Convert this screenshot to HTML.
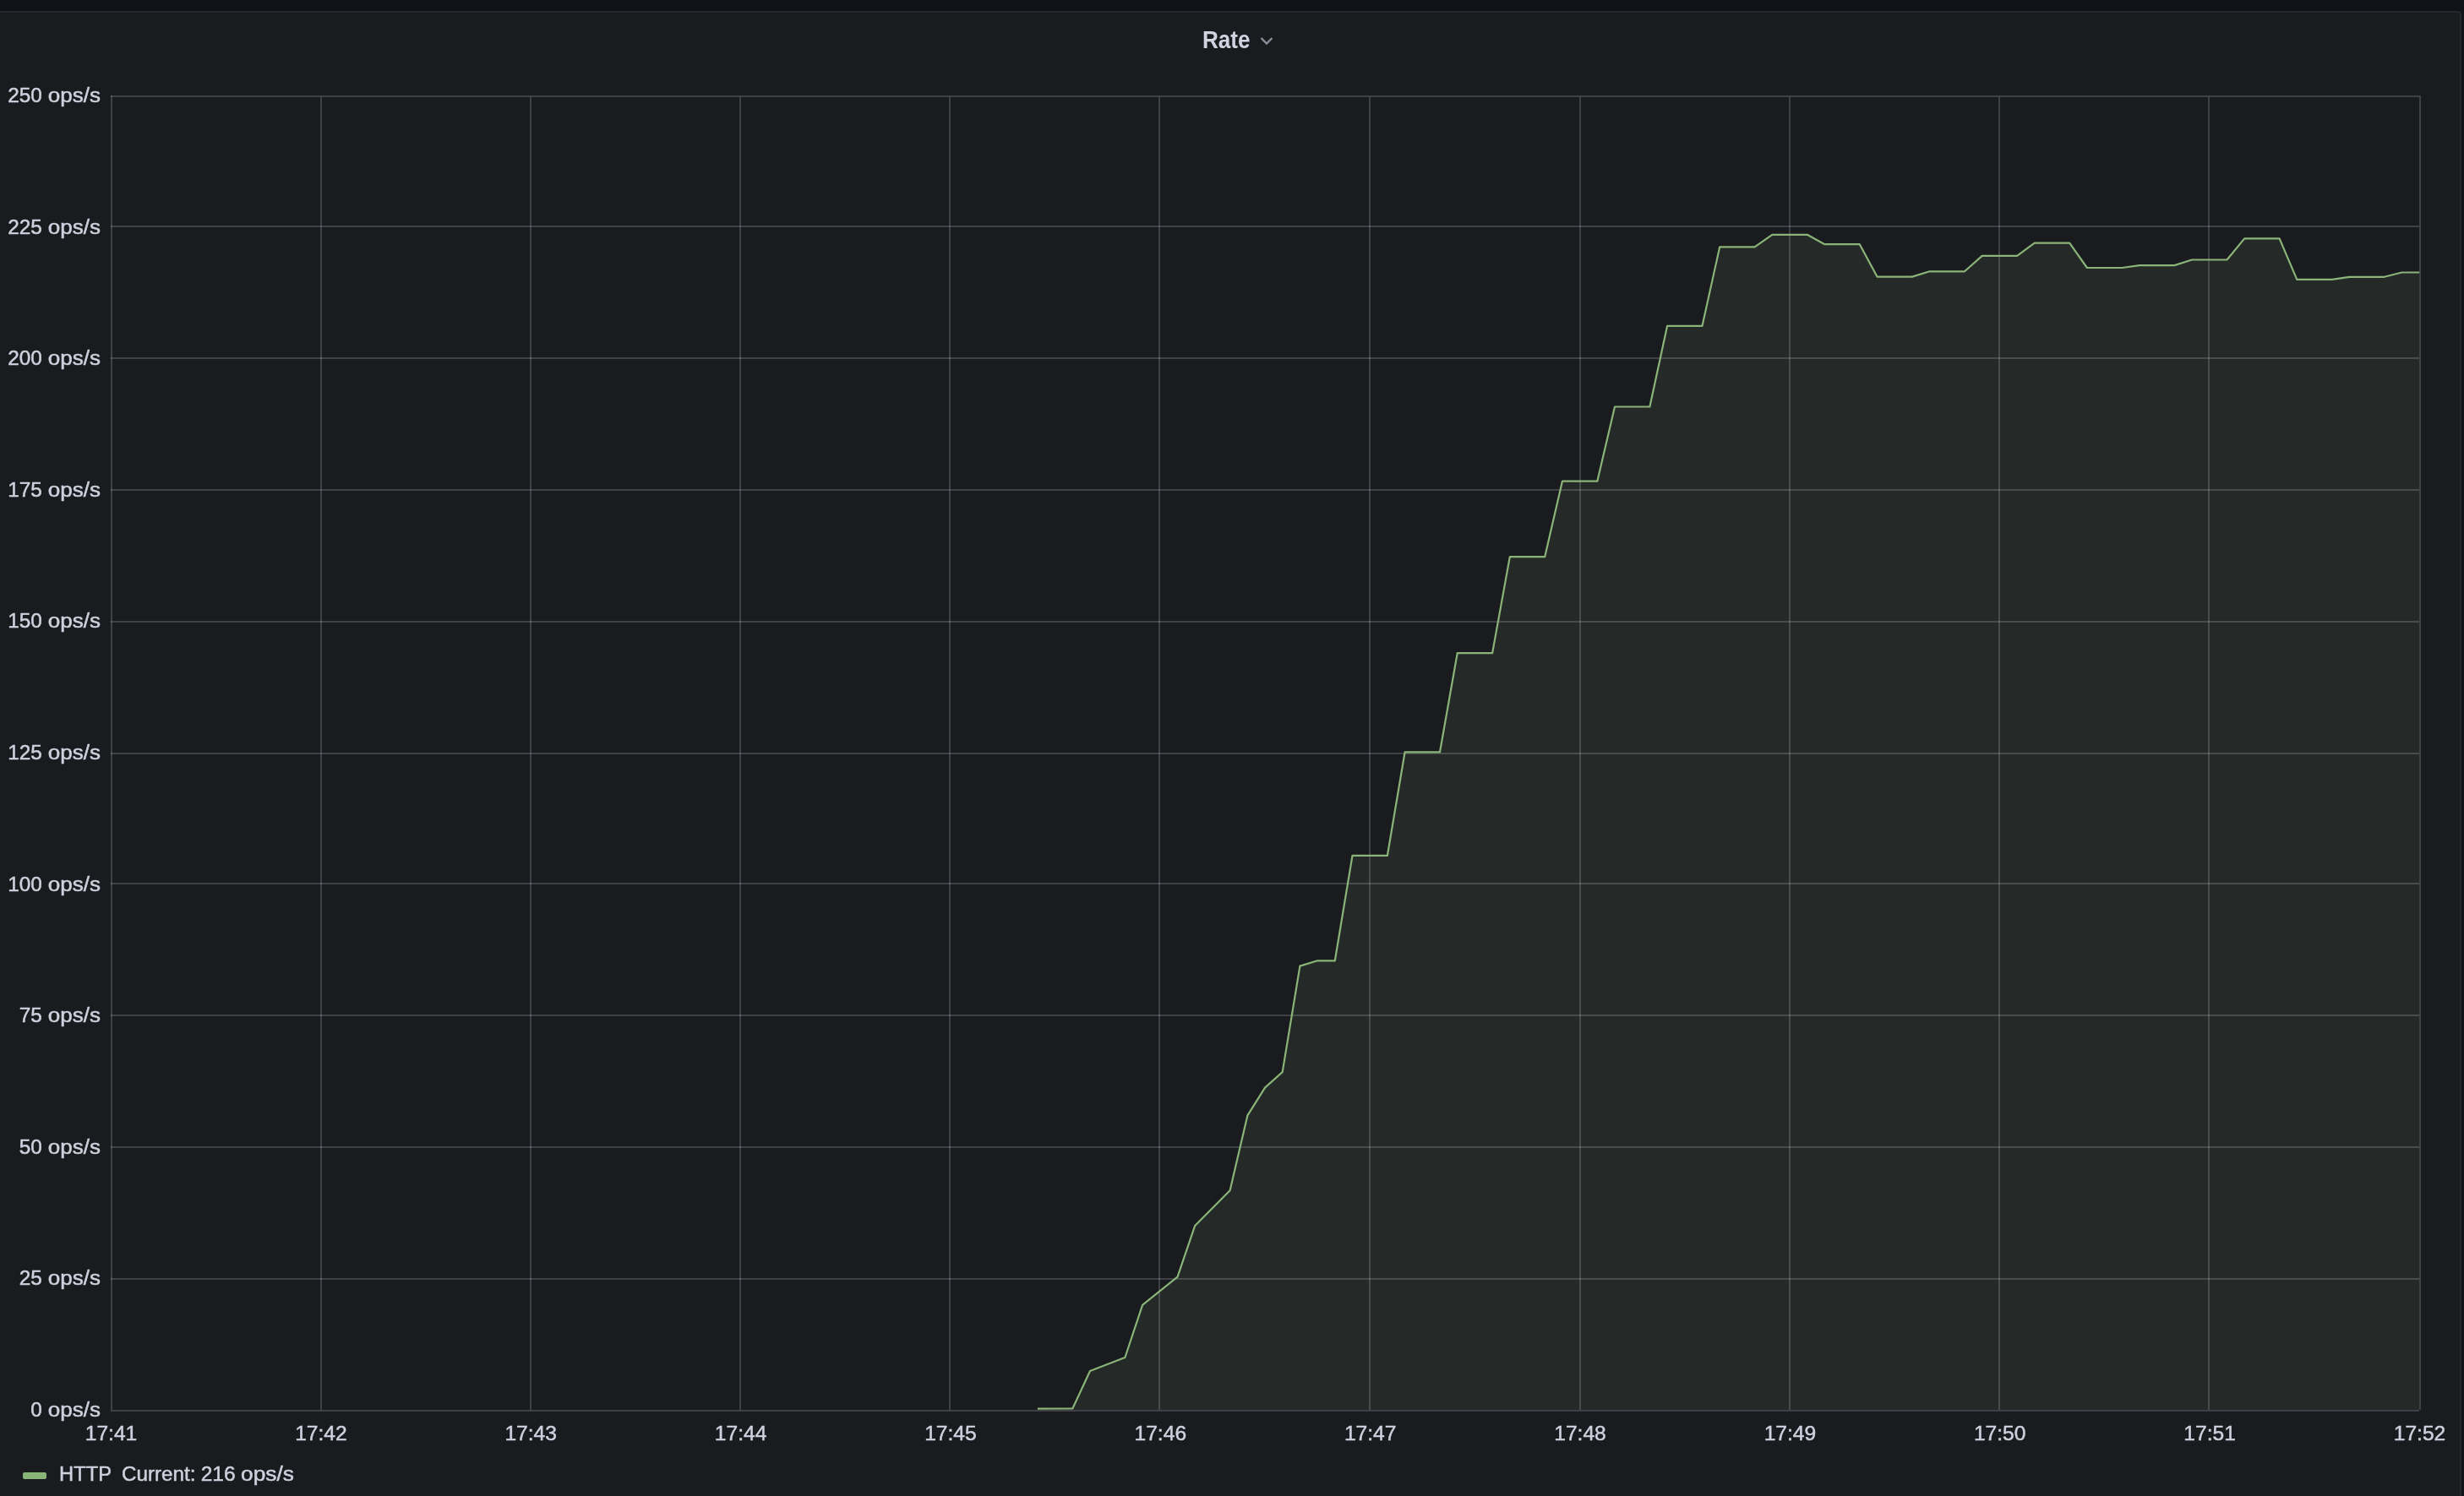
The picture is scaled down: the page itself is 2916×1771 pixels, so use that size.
<!DOCTYPE html>
<html lang="en">
<head>
<meta charset="utf-8">
<title>Rate</title>
<style>
html,body{margin:0;padding:0;}
body{width:2916px;height:1771px;overflow:hidden;background:#111217;font-family:"Liberation Sans",sans-serif;color:#ccccdc;position:relative;}
.panel{position:absolute;left:-10px;top:13px;width:2919px;height:1800px;background:#1a1b1f;border:2px solid #27282d;border-radius:4px;}
.panel-header{will-change:transform;position:absolute;left:8px;top:-15px;width:2911px;height:75px;}
.panel-title{position:absolute;left:1423px;top:29.7px;font-size:29px;line-height:34px;font-weight:bold;color:#d2d2e0;white-space:nowrap;transform-origin:0 50%;transform:scaleX(0.9);}
.caret{position:absolute;left:1489px;top:42px;}
svg.graph{position:absolute;left:0;top:0;will-change:transform;}
svg.graph text{font-family:"Liberation Sans",sans-serif;font-size:24.6px;fill:#d0d0de;stroke:#d0d0de;stroke-width:0.5px;}
.legend{will-change:transform;position:absolute;left:0;top:1724px;height:40px;width:100%;font-size:24.6px;color:#d0d0de;-webkit-text-stroke:0.5px #d0d0de;}
.legend .sw{position:absolute;left:27px;top:19px;width:28px;height:8px;border-radius:2px;background:#88b478;}
.legend .name{position:absolute;left:69.5px;line-height:32px;white-space:nowrap;transform-origin:0 50%;transform:scaleX(0.965);}
.legend .name,.legend .val span{top:4.7px;}
.legend .val span{position:absolute;line-height:32px;white-space:nowrap;transform-origin:0 50%;}
.legend .v1{left:143.6px;transform:scaleX(0.984);}
.legend .v2{left:237.7px;transform:scaleX(1.0);}
.legend .v3{left:284.7px;transform:scaleX(1.07);}
</style>
</head>
<body>
<div class="panel">
  <div class="panel-header">
    <span class="panel-title">Rate</span>
    <svg class="caret" width="20" height="14" viewBox="0 0 20 14"><path d="M3.5 3 L10 9.5 L16.5 3" fill="none" stroke="#8e8e9c" stroke-width="2.3"/></svg>
  </div>
</div>
<svg class="graph" width="2916" height="1771" viewBox="0 0 2916 1771">
  <g fill="none" stroke="rgba(220,220,235,0.2)" stroke-width="2"><path d="M380,115V1669"/><path d="M628,115V1669"/><path d="M876,115V1669"/><path d="M1124,115V1669"/><path d="M1372,115V1669"/><path d="M1621,115V1669"/><path d="M1870,115V1669"/><path d="M2118,115V1669"/><path d="M2366,115V1669"/><path d="M2614,115V1669"/><path d="M131,268H2863"/><path d="M131,424H2863"/><path d="M131,580H2863"/><path d="M131,736H2863"/><path d="M131,892H2863"/><path d="M131,1046H2863"/><path d="M131,1202H2863"/><path d="M131,1358H2863"/><path d="M131,1514H2863"/><path d="M131,114H2864V1669"/><path d="M132,113V1670H2863"/></g>
  <path d="M1227.9,1669 L1227.9,1667.7 L1269.3,1667.5 L1290.0,1623.0 L1331.4,1607.0 L1352.1,1544.8 L1393.5,1511.6 L1414.2,1450.9 L1455.6,1409.2 L1476.3,1320.7 L1497.0,1287.6 L1517.7,1269.1 L1538.4,1143.6 L1559.1,1137.3 L1579.8,1137.3 L1600.5,1012.8 L1641.9,1012.8 L1662.6,890.3 L1704.0,890.3 L1724.7,773.2 L1766.1,773.2 L1786.8,659.2 L1828.2,659.2 L1848.9,569.7 L1890.3,569.7 L1911.0,481.5 L1952.4,481.5 L1973.1,385.8 L2014.5,385.8 L2035.2,292.3 L2076.6,292.3 L2097.3,277.8 L2138.7,277.8 L2159.4,289.2 L2200.8,289.2 L2221.5,327.6 L2262.9,327.6 L2283.6,321.3 L2325.0,321.3 L2345.7,302.9 L2387.1,302.9 L2407.8,287.7 L2449.2,287.7 L2469.9,317.0 L2511.3,317.0 L2532.0,314.1 L2573.4,314.1 L2594.1,307.5 L2635.5,307.5 L2656.2,282.4 L2697.6,282.4 L2718.3,330.9 L2759.7,330.9 L2780.4,327.8 L2821.8,327.8 L2842.5,322.5 L2863.2,322.5 L2863,322.5 L2863,1669 Z" fill="#88b183" fill-opacity="0.1"/>
  <polyline points="1227.9,1667.7 1269.3,1667.5 1290.0,1623.0 1331.4,1607.0 1352.1,1544.8 1393.5,1511.6 1414.2,1450.9 1455.6,1409.2 1476.3,1320.7 1497.0,1287.6 1517.7,1269.1 1538.4,1143.6 1559.1,1137.3 1579.8,1137.3 1600.5,1012.8 1641.9,1012.8 1662.6,890.3 1704.0,890.3 1724.7,773.2 1766.1,773.2 1786.8,659.2 1828.2,659.2 1848.9,569.7 1890.3,569.7 1911.0,481.5 1952.4,481.5 1973.1,385.8 2014.5,385.8 2035.2,292.3 2076.6,292.3 2097.3,277.8 2138.7,277.8 2159.4,289.2 2200.8,289.2 2221.5,327.6 2262.9,327.6 2283.6,321.3 2325.0,321.3 2345.7,302.9 2387.1,302.9 2407.8,287.7 2449.2,287.7 2469.9,317.0 2511.3,317.0 2532.0,314.1 2573.4,314.1 2594.1,307.5 2635.5,307.5 2656.2,282.4 2697.6,282.4 2718.3,330.9 2759.7,330.9 2780.4,327.8 2821.8,327.8 2842.5,322.5 2863.2,322.5" fill="none" stroke="#8ab478" stroke-width="2.2" stroke-linejoin="round"/>
  <g><g transform="translate(0 121.0)"><text transform="translate(49.9 0) scale(0.99 1)" text-anchor="end">250</text> <text transform="translate(119.0 0) scale(1.06 1)" text-anchor="end">ops/s</text></g><g transform="translate(0 276.6)"><text transform="translate(49.9 0) scale(0.99 1)" text-anchor="end">225</text> <text transform="translate(119.0 0) scale(1.06 1)" text-anchor="end">ops/s</text></g><g transform="translate(0 432.2)"><text transform="translate(49.9 0) scale(0.99 1)" text-anchor="end">200</text> <text transform="translate(119.0 0) scale(1.06 1)" text-anchor="end">ops/s</text></g><g transform="translate(0 587.7)"><text transform="translate(49.9 0) scale(0.99 1)" text-anchor="end">175</text> <text transform="translate(119.0 0) scale(1.06 1)" text-anchor="end">ops/s</text></g><g transform="translate(0 743.3)"><text transform="translate(49.9 0) scale(0.99 1)" text-anchor="end">150</text> <text transform="translate(119.0 0) scale(1.06 1)" text-anchor="end">ops/s</text></g><g transform="translate(0 898.9)"><text transform="translate(49.9 0) scale(0.99 1)" text-anchor="end">125</text> <text transform="translate(119.0 0) scale(1.06 1)" text-anchor="end">ops/s</text></g><g transform="translate(0 1054.5)"><text transform="translate(49.9 0) scale(0.99 1)" text-anchor="end">100</text> <text transform="translate(119.0 0) scale(1.06 1)" text-anchor="end">ops/s</text></g><g transform="translate(0 1210.1)"><text transform="translate(49.9 0) scale(0.99 1)" text-anchor="end">75</text> <text transform="translate(119.0 0) scale(1.06 1)" text-anchor="end">ops/s</text></g><g transform="translate(0 1365.6)"><text transform="translate(49.9 0) scale(0.99 1)" text-anchor="end">50</text> <text transform="translate(119.0 0) scale(1.06 1)" text-anchor="end">ops/s</text></g><g transform="translate(0 1521.2)"><text transform="translate(49.9 0) scale(0.99 1)" text-anchor="end">25</text> <text transform="translate(119.0 0) scale(1.06 1)" text-anchor="end">ops/s</text></g><g transform="translate(0 1676.8)"><text transform="translate(49.9 0) scale(0.99 1)" text-anchor="end">0</text> <text transform="translate(119.0 0) scale(1.06 1)" text-anchor="end">ops/s</text></g></g>
  <g><text x="131.5" y="1704.8" text-anchor="middle">17:41</text><text x="379.9" y="1704.8" text-anchor="middle">17:42</text><text x="628.2" y="1704.8" text-anchor="middle">17:43</text><text x="876.6" y="1704.8" text-anchor="middle">17:44</text><text x="1124.9" y="1704.8" text-anchor="middle">17:45</text><text x="1373.3" y="1704.8" text-anchor="middle">17:46</text><text x="1621.7" y="1704.8" text-anchor="middle">17:47</text><text x="1870.0" y="1704.8" text-anchor="middle">17:48</text><text x="2118.4" y="1704.8" text-anchor="middle">17:49</text><text x="2366.7" y="1704.8" text-anchor="middle">17:50</text><text x="2615.1" y="1704.8" text-anchor="middle">17:51</text><text x="2863.5" y="1704.8" text-anchor="middle">17:52</text></g>
</svg>
<div class="legend"><span class="sw"></span><span class="name">HTTP</span><span class="val"><span class="v1">Current:</span> <span class="v2">216</span> <span class="v3">ops/s</span></span></div>
</body>
</html>
